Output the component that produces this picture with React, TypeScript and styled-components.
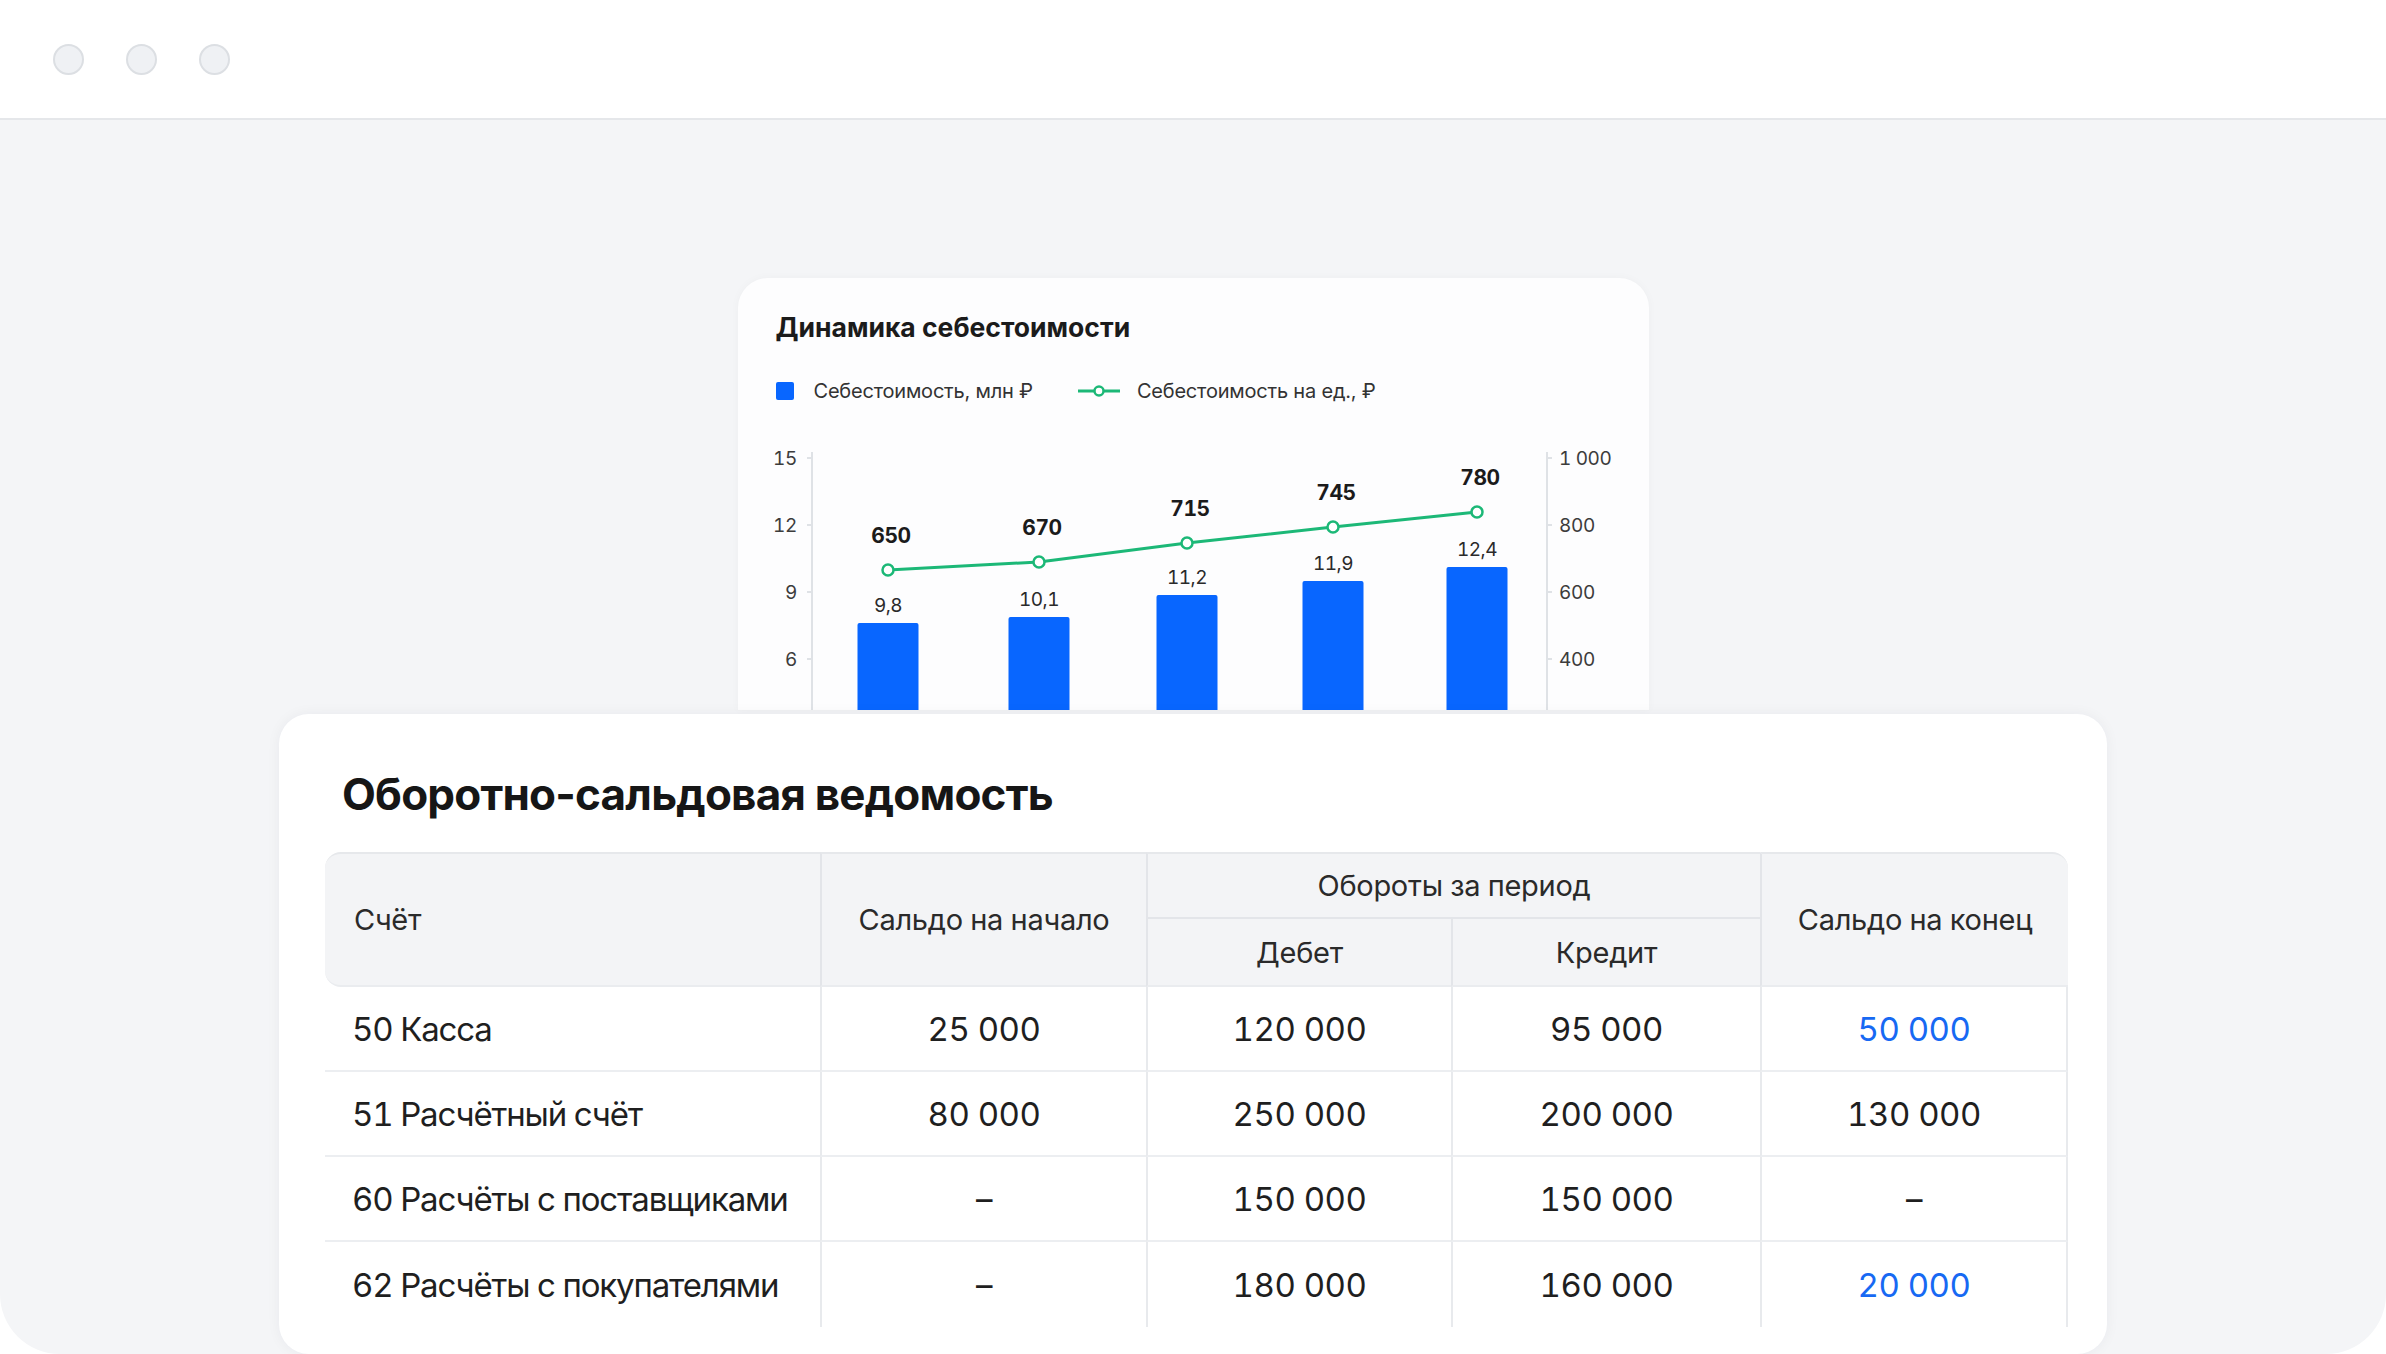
import React from "react";
import styled, { createGlobalStyle } from "styled-components";

const Global = createGlobalStyle`
  html, body { margin: 0; padding: 0; background: #ffffff; }
  body { font-family: Inter, "Liberation Sans", Arial, sans-serif; color: #1f1f1f; }
  * { box-sizing: border-box; }
`;

const Window = styled.div`
  width: 100%;
  height: 100vh;
  display: flex;
  flex-direction: column;
  border-radius: 0 0 60px 60px;
  overflow: hidden;
  background: #f4f5f7;
`;

const TitleBar = styled.div`
  height: 120px;
  flex: none;
  background: #ffffff;
  border-bottom: 2px solid #e5e7ea;
  display: flex;
  align-items: center;
  gap: 42px;
  padding-left: 53px;
`;

const Dot = styled.span`
  width: 31px;
  height: 31px;
  border-radius: 50%;
  background: #eff1f4;
  border: 2px solid #dcdfe3;
`;

const Stage = styled.div`
  flex: 1;
  display: flex;
  flex-direction: column;
  align-items: center;
  padding-top: 158px;
  min-height: 0;
`;

const ChartCard = styled.section`
  width: 911px;
  height: 432px;
  flex: none;
  background: #fdfdfe;
  border-radius: 30px 30px 0 0;
  overflow: hidden;
  padding: 34px 38px 0;
  box-shadow: 0 0 10px rgba(30, 40, 60, 0.03);
`;

const ChartTitle = styled.h3`
  margin: 0;
  font-size: 26.5px;
  line-height: 30px;
  font-weight: 700;
  letter-spacing: 0;
  color: #1b1b1b;
`;

const Legend = styled.div`
  margin-top: 37px;
  height: 24px;
  display: flex;
  align-items: center;
  gap: 45px;
`;

const LegendItem = styled.div<{ $gap: number }>`
  display: flex;
  align-items: center;
  gap: ${(p) => p.$gap}px;
  font-size: 20px;
  letter-spacing: -0.01em;
  color: #333;
`;

const Swatch = styled.span`
  width: 18px;
  height: 18px;
  border-radius: 2px;
  background: #0866ff;
`;

const ChartSvg = styled.svg`
  display: block;
  margin-top: 27px;
  overflow: visible;
  font-family: Inter, "Liberation Sans", Arial, sans-serif;
  font-variant-numeric: tabular-nums;
`;

const AxisText = styled.text`
  font-size: 19px;
  fill: #3c3c3c;
  letter-spacing: -0.02em;
`;

const ValueText = styled.text`
  font-size: 19px;
  fill: #2a2a2a;
  letter-spacing: -0.03em;
`;

const PointText = styled.text`
  font-size: 21px;
  font-weight: 700;
  fill: #1b1b1b;
  letter-spacing: -0.02em;
`;

const TableCard = styled.section`
  width: 1828px;
  flex: 1;
  margin-top: 4px;
  background: #ffffff;
  border-radius: 30px;
  padding: 54px 39px 0 46px;
  box-shadow: 0 0 14px rgba(30, 40, 60, 0.05);
  position: relative;
  z-index: 1;
`;

const TableTitle = styled.h2`
  margin: 0 0 32px 17px;
  font-size: 44px;
  line-height: 52px;
  font-weight: 700;
  letter-spacing: -0.018em;
  color: #161616;
`;

const Grid = styled.div`
  display: grid;
  grid-template-columns: 495px 326px 305px 309px 308px;
  grid-template-rows: 67px 68px repeat(4, 85px);
  font-variant-numeric: tabular-nums;
`;

type HeadProps = {
  $col: string;
  $row: string;
  $left?: boolean;
  $radius?: string;
  $split?: boolean;
  $align?: "start" | "center";
};

const HeadCell = styled.div<HeadProps>`
  grid-column: ${(p) => p.$col};
  grid-row: ${(p) => p.$row};
  background: #f3f4f6;
  display: flex;
  align-items: center;
  justify-content: ${(p) => (p.$align === "start" ? "flex-start" : "center")};
  padding-left: ${(p) => (p.$align === "start" ? "29px" : "0")};
  font-size: 29px;
  letter-spacing: -0.01em;
  color: #2a2a2a;
  border-top: ${(p) => (p.$row.startsWith("1") ? "2px solid #e6e8eb" : "none")};
  border-left: ${(p) => (p.$left ? "2px solid #e3e5e9" : "none")};
  border-bottom: ${(p) => (p.$split ? "2px solid #e3e5e9" : "2px solid #eaecef")};
  border-radius: ${(p) => p.$radius || "0"};
`;

type BodyProps = {
  $first?: boolean;
  $last?: boolean;
  $bottom?: boolean;
  $accent?: boolean;
};

const BodyCell = styled.div<BodyProps>`
  display: flex;
  align-items: center;
  justify-content: ${(p) => (p.$first ? "flex-start" : "center")};
  padding-left: ${(p) => (p.$first ? "27px" : "0")};
  font-size: 33px;
  letter-spacing: ${(p) => (p.$first ? "-0.035em" : "-0.015em")};
  color: ${(p) => (p.$accent ? "#1769f3" : "#1f1f1f")};
  border-left: ${(p) => (p.$first ? "none" : "2px solid #e8eaed")};
  border-right: ${(p) => (p.$last ? "2px solid #e8eaed" : "none")};
  border-bottom: ${(p) => (p.$bottom ? "none" : "2px solid #eceef1")};
`;

const bars = [
  { x: 112, top: 193, v: "9,8", ly: 140, lv: "650" },
  { x: 263, top: 187, v: "10,1", ly: 132, lv: "670" },
  { x: 411, top: 165, v: "11,2", ly: 113, lv: "715" },
  { x: 557, top: 151, v: "11,9", ly: 97, lv: "745" },
  { x: 701, top: 137, v: "12,4", ly: 82, lv: "780" },
];

const ticks = [
  { y: 28, l: "15", r: "1 000" },
  { y: 95, l: "12", r: "800" },
  { y: 162, l: "9", r: "600" },
  { y: 229, l: "6", r: "400" },
];

const rows = [
  { name: "50 Касса", a: "25 000", d: "120 000", k: "95 000", e: "50 000", accent: true },
  { name: "51 Расчётный счёт", a: "80 000", d: "250 000", k: "200 000", e: "130 000", accent: false },
  { name: "60 Расчёты с поставщиками", a: "–", d: "150 000", k: "150 000", e: "–", accent: false },
  { name: "62 Расчёты с покупателями", a: "–", d: "180 000", k: "160 000", e: "20 000", accent: true },
];

function Chart() {
  const green = "#1cb877";
  const pts = bars.map((b) => `${b.x},${b.ly}`).join(" ");
  return (
    <ChartSvg width={835} height={300} viewBox="0 0 835 300">
      <line x1={36} y1={22} x2={36} y2={320} stroke="#dfe2e6" strokeWidth={2} />
      <line x1={771} y1={22} x2={771} y2={320} stroke="#dfe2e6" strokeWidth={2} />
      {ticks.map((t) => (
        <g key={t.l}>
          <line x1={31} y1={t.y} x2={36} y2={t.y} stroke="#dfe2e6" strokeWidth={2} />
          <line x1={771} y1={t.y} x2={776} y2={t.y} stroke="#dfe2e6" strokeWidth={2} />
          <AxisText x={21} y={t.y} textAnchor="end" dominantBaseline="central">
            {t.l}
          </AxisText>
          <AxisText x={783} y={t.y} textAnchor="start" dominantBaseline="central">
            {t.r}
          </AxisText>
        </g>
      ))}
      {bars.map((b) => (
        <g key={b.v}>
          <rect x={b.x - 30.5} y={b.top} width={61} height={320 - b.top} rx={2} fill="#0866ff" />
          <ValueText x={b.x} y={b.top - 18} textAnchor="middle" dominantBaseline="central">
            {b.v}
          </ValueText>
        </g>
      ))}
      <polyline points={pts} fill="none" stroke={green} strokeWidth={3} strokeLinejoin="round" />
      {bars.map((b) => (
        <g key={b.lv}>
          <circle cx={b.x} cy={b.ly} r={5.5} fill="#ffffff" stroke={green} strokeWidth={2.5} />
          <PointText x={b.x + 3} y={b.ly - 35} textAnchor="middle" dominantBaseline="central">
            {b.lv}
          </PointText>
        </g>
      ))}
    </ChartSvg>
  );
}

export default function App() {
  return (
    <>
      <Global />
      <Window>
        <TitleBar>
          <Dot />
          <Dot />
          <Dot />
        </TitleBar>
        <Stage>
          <ChartCard>
            <ChartTitle>Динамика себестоимости</ChartTitle>
            <Legend>
              <LegendItem $gap={20}>
                <Swatch />
                Себестоимость, млн ₽
              </LegendItem>
              <LegendItem $gap={17}>
                <svg width={42} height={14} viewBox="0 0 42 14">
                  <line x1={0} y1={7} x2={42} y2={7} stroke="#1cb877" strokeWidth={3} />
                  <circle cx={21} cy={7} r={4.5} fill="#fff" stroke="#1cb877" strokeWidth={2.5} />
                </svg>
                Себестоимость на ед., ₽
              </LegendItem>
            </Legend>
            <Chart />
          </ChartCard>
          <TableCard>
            <TableTitle>Оборотно-сальдовая ведомость</TableTitle>
            <Grid>
              <HeadCell $col="1" $row="1 / 3" $align="start" $radius="16px 0 0 16px">
                Счёт
              </HeadCell>
              <HeadCell $col="2" $row="1 / 3" $left>
                Сальдо на начало
              </HeadCell>
              <HeadCell $col="3 / 5" $row="1" $left $split>
                Обороты за период
              </HeadCell>
              <HeadCell $col="3" $row="2" $left>
                Дебет
              </HeadCell>
              <HeadCell $col="4" $row="2" $left>
                Кредит
              </HeadCell>
              <HeadCell $col="5" $row="1 / 3" $left $radius="0 16px 0 0">
                Сальдо на конец
              </HeadCell>
              {rows.map((r, i) => {
                const bottom = i === rows.length - 1;
                return (
                  <React.Fragment key={r.name}>
                    <BodyCell $first $bottom={bottom}>
                      {r.name}
                    </BodyCell>
                    <BodyCell $bottom={bottom}>{r.a}</BodyCell>
                    <BodyCell $bottom={bottom}>{r.d}</BodyCell>
                    <BodyCell $bottom={bottom}>{r.k}</BodyCell>
                    <BodyCell $last $bottom={bottom} $accent={r.accent}>
                      {r.e}
                    </BodyCell>
                  </React.Fragment>
                );
              })}
            </Grid>
          </TableCard>
        </Stage>
      </Window>
    </>
  );
}
